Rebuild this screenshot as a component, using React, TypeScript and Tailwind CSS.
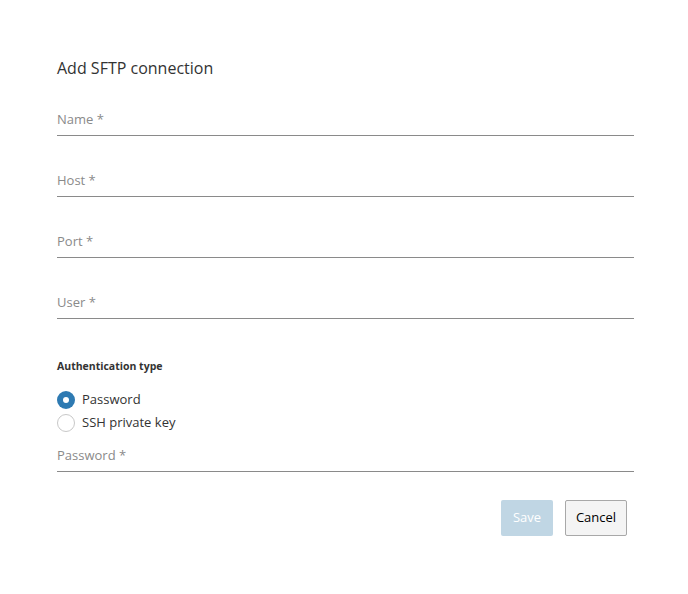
import React, { useState } from 'react';

const FIELDS = ['Name *', 'Host *', 'Port *', 'User *'];

const Field: React.FC<{ label: string; className?: string }> = ({ label, className }) => (
  <div className={`border-b border-[#8a8a8a] h-[33px] flex items-end pb-[9px] ${className ?? ''}`}>
    <span className="text-[13px] leading-none text-[#8a8a8a]">{label}</span>
  </div>
);

const Radio: React.FC<{ checked: boolean; label: string; onClick: () => void }> = ({
  checked,
  label,
  onClick,
}) => (
  <div className="flex items-center gap-[7px] h-[23px] cursor-pointer" onClick={onClick}>
    {checked ? (
      <span className="w-[18px] h-[18px] rounded-full bg-[#2e7ab2] flex items-center justify-center">
        <span className="w-[6px] h-[6px] rounded-full bg-white" />
      </span>
    ) : (
      <span className="w-[18px] h-[18px] rounded-full border border-[#c8c8c8] bg-white" />
    )}
    <span className="text-[13px] text-[#333]">{label}</span>
  </div>
);

export default function App() {
  const [auth, setAuth] = useState<'password' | 'key'>('password');

  return (
    <div
      className="w-[688px] h-[594px] bg-white pl-[57px] pr-[54px] pt-[57px]"
      style={{ fontFamily: '"Open Sans", sans-serif' }}
    >
      <h2 className="text-[16px] leading-[22px] text-[#333]">Add SFTP connection</h2>

      <div className="mt-[24px] flex flex-col gap-[28px]">
        {FIELDS.map((f) => (
          <Field key={f} label={f} />
        ))}
      </div>

      <p className="mt-[39px] text-[10.5px] leading-[16.5px] font-bold text-[#333]">
        Authentication type
      </p>

      <div className="mt-[14px] flex flex-col">
        <Radio checked={auth === 'password'} label="Password" onClick={() => setAuth('password')} />
        <Radio checked={auth === 'key'} label="SSH private key" onClick={() => setAuth('key')} />
      </div>

      <Field label={auth === 'password' ? 'Password *' : 'Private key *'} className="mt-[4px]" />

      <div className="mt-[28px] flex justify-end gap-[12px] pr-[7px]">
        <button
          disabled
          className="w-[52px] h-[36px] rounded-[2px] bg-[#c0d6e4] text-white text-[13px] pt-[1px]"
        >
          Save
        </button>
        <button className="w-[62px] h-[36px] rounded-[2px] border border-[#a8a8a8] bg-[#f4f4f4] text-[13px] text-black pt-[1px]">
          Cancel
        </button>
      </div>
    </div>
  );
}
